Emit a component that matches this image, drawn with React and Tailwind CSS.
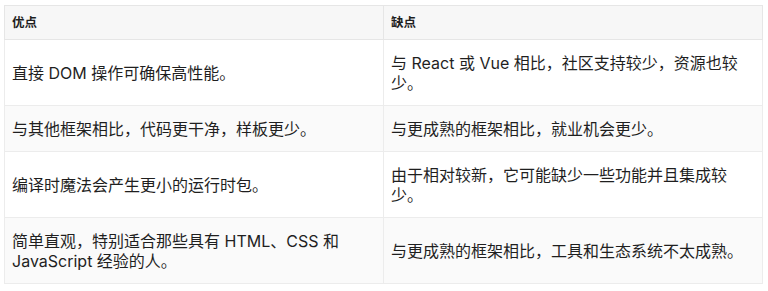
export default function App() {
  const rows = [
    ["直接 DOM 操作可确保高性能。", "与 React 或 Vue 相比，社区支持较少，资源也较少。"],
    ["与其他框架相比，代码更干净，样板更少。", "与更成熟的框架相比，就业机会更少。"],
    ["编译时魔法会产生更小的运行时包。", "由于相对较新，它可能缺少一些功能并且集成较少。"],
    ["简单直观，特别适合那些具有 HTML、CSS 和 JavaScript 经验的人。", "与更成熟的框架相比，工具和生态系统不太成熟。"],
  ];
  return (
    <div
      className="w-[768px] h-[291px] bg-white pl-[4px] pt-[5px] text-[#1f1f1f]"
      style={{ fontFamily: 'Inter, "Noto Sans CJK SC", sans-serif' }}
    >
      <table className="w-[759px] table-fixed border-collapse border border-[#e6e6e6]">
        <thead>
          <tr className="bg-[#f7f7f7]">
            <th className="w-1/2 border border-[#e6e6e6] px-[7px] pt-[9px] pb-[8px] text-left text-[12.5px] leading-[16px] font-bold">
              优点
            </th>
            <th className="w-1/2 border border-[#e6e6e6] px-[7px] pt-[9px] pb-[8px] text-left text-[12.5px] leading-[16px] font-bold">
              缺点
            </th>
          </tr>
        </thead>
        <tbody>
          {rows.map((r, i) => (
            <tr key={i} className={i % 2 === 1 ? "bg-[#fafafa]" : "bg-white"}>
              <td className="border border-[#ececec] px-[7px] pt-[13px] pb-[12px] align-middle text-[16px] leading-[20px]">
                {r[0]}
              </td>
              <td className="border border-[#ececec] px-[7px] pt-[13px] pb-[12px] align-middle text-[16px] leading-[20px]">
                {r[1]}
              </td>
            </tr>
          ))}
        </tbody>
      </table>
    </div>
  );
}
